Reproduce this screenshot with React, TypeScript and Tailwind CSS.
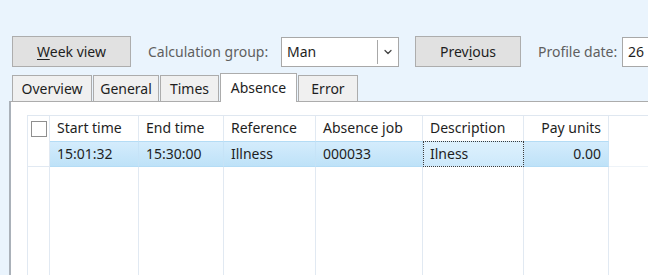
import { ChevronDown } from "lucide-react";

const columns = [
  { key: "start", label: "Start time", width: "w-[89px]", right: false },
  { key: "end", label: "End time", width: "w-[85px]", right: false },
  { key: "ref", label: "Reference", width: "w-[92px]", right: false },
  { key: "job", label: "Absence job", width: "w-[107px]", right: false },
  { key: "desc", label: "Description", width: "w-[101px]", right: false },
  { key: "pay", label: "Pay units", width: "w-[85px]", right: true },
];

const row: Record<string, string> = {
  start: "15:01:32",
  end: "15:30:00",
  ref: "Illness",
  job: "000033",
  desc: "Ilness",
  pay: "0.00",
};

const tabs = [
  { label: "Overview", width: "w-[80px]" },
  { label: "General", width: "w-[66px]" },
  { label: "Times", width: "w-[59px]" },
  { label: "Absence", width: "w-[77px]", active: true },
  { label: "Error", width: "w-[60px]" },
];

export default function App() {
  return (
    <div className="w-[648px] h-[275px] overflow-hidden bg-[#eaf4fd] flex flex-col font-['Noto_Sans',sans-serif] text-[14px] text-[#1e1e1e]">
      {/* toolbar */}
      <div className="flex items-center pl-[12px] pt-[36px] h-[67px] shrink-0 whitespace-nowrap">
        <button className="shrink-0 w-[119px] h-[31px] bg-[#e1e1e1] border border-[#adadad]">
          <span className="underline underline-offset-2">W</span>eek view
        </button>
        <span className="shrink-0 ml-[17px] w-[126px] text-[#5f5f5f]">Calculation group:</span>
        <div className="shrink-0 ml-[7px] w-[118px] h-[30px] bg-white border border-[#a8a8a8] flex items-center">
          <span className="flex-1 pl-[5px]">Man</span>
          <div className="w-[21px] h-[24px] border-l border-[#a8a8a8] flex items-center justify-center">
            <ChevronDown size={12} strokeWidth={2.5} className="text-[#444]" />
          </div>
        </div>
        <button className="shrink-0 ml-[16px] w-[106px] h-[31px] bg-[#e1e1e1] border border-[#adadad]">
          Prev<span className="underline underline-offset-2">i</span>ous
        </button>
        <span className="shrink-0 ml-[17px] w-[80px] text-[#5f5f5f]">Profile date:</span>
        <div className="shrink-0 ml-[4px] w-[60px] h-[30px] bg-white border border-[#a8a8a8] flex items-center pl-[5px]">
          26
        </div>
      </div>

      {/* tabs */}
      <div className="flex items-end pl-[12px] h-[34px] shrink-0">
        {tabs.map((t) =>
          t.active ? (
            <div
              key={t.label}
              className={`${t.width} h-[29px] -mb-px relative z-10 bg-white border border-b-0 border-[#acacac] flex items-center justify-center ml-px pb-px`}
            >
              {t.label}
            </div>
          ) : (
            <div
              key={t.label}
              className={`${t.width} h-[26px] bg-[#f0f0f0] border border-[#acacac] border-b-0 flex items-center justify-center ml-px first:ml-0 pb-px`}
            >
              {t.label}
            </div>
          )
        )}
      </div>

      {/* panel */}
      <div className="flex-1 ml-[9px] border-l-2 border-t border-[#aab1b9] border-t-[#acacac] bg-white pl-[16px] pt-[13px] flex flex-col">
        <div className="flex-1 flex flex-col border-t border-[#dfe7f0]">
          {/* header */}
          <div className="flex h-[25px] shrink-0">
            <div className="w-[23px] border-l border-r border-[#e1e9f2] flex items-center justify-center">
              <div className="w-[16px] h-[16px] border border-[#8f8f8f] bg-white" />
            </div>
            {columns.map((c) => (
              <div
                key={c.key}
                className={`${c.width} border-r border-[#e1e9f2] px-[7px] pb-[2px] flex items-center ${c.right ? "justify-end" : ""}`}
              >
                {c.label}
              </div>
            ))}
          </div>
          {/* selected row */}
          <div className="flex h-[26px] shrink-0">
            <div className="w-[23px] border-l border-r border-[#e1e9f2] border-b" />
            {columns.map((c) =>
              c.key === "desc" ? (
                <div
                  key={c.key}
                  className={`${c.width} border border-dotted border-[#3c3c3c] bg-gradient-to-b from-[#def1fd] to-[#cde9fb] px-[6px] pb-[2px] flex items-center`}
                >
                  {row[c.key]}
                </div>
              ) : (
                <div
                  key={c.key}
                  className={`${c.width} border-r border-t border-b border-[#b4dcf5] border-r-[#c6e3f7] bg-gradient-to-b from-[#d4ecfc] to-[#bee2f8] px-[7px] pb-[2px] flex items-center ${c.right ? "justify-end" : ""}`}
                >
                  {row[c.key]}
                </div>
              )
            )}
            <div className="flex-1 border-b border-[#eef3f8]" />
          </div>
          {/* empty area */}
          <div className="flex flex-1">
            <div className="w-[23px] border-l border-r border-[#e1e9f2]" />
            {columns.map((c) => (
              <div key={c.key} className={`${c.width} border-r border-[#e1e9f2]`} />
            ))}
          </div>
        </div>
      </div>
    </div>
  );
}
